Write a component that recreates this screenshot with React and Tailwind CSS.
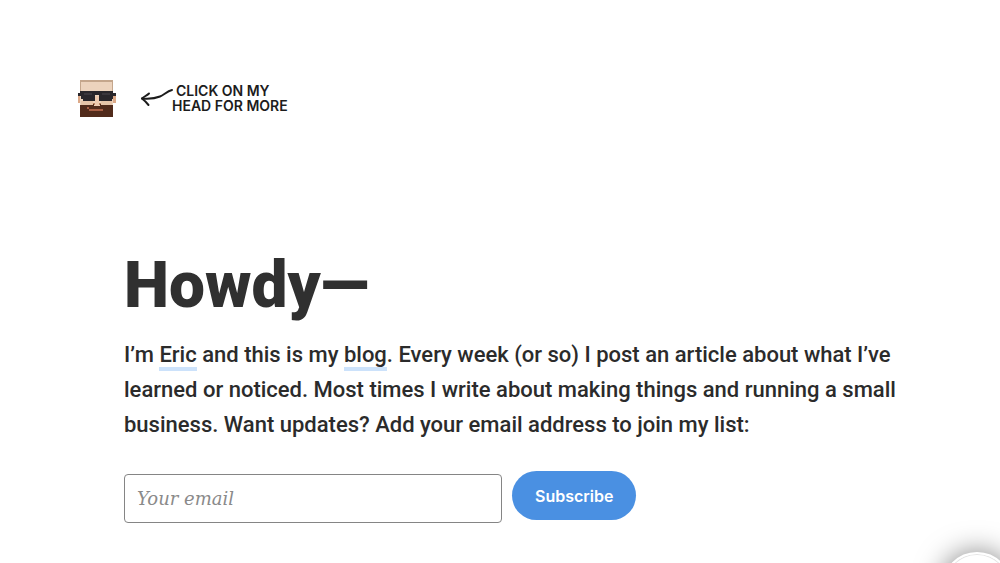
function Avatar() {
  return (
    <svg viewBox="0 0 38 38" className="size-[38px]" aria-hidden="true">
      <path d="M0 16h3v8H0zM35 16h3v8h-3z" fill="#dca988" />
      <path d="M2 1h33v27H2z" fill="#ecd3bd" />
      <path d="M2 1h33v2H2zM2 2h1v10H2zM34 2h1v10h-1z" fill="#c4a68c" />
      <path d="M3 22h12v4H3zM23 22h11v4H23z" fill="#e6c4a8" />
      <path d="M17 17h4v10h-4z" fill="#edc9ae" />
      <path d="M15 24h2v2h-2zM21 24h2v2h-2z" fill="#b98362" />
      <path d="M2 26h13v-1h1v2h6v-2h1v1h12v12H2z" fill="#512b1b" />
      <path d="M9 28h2v2H9zM11 30h14v2H11z" fill="#a85f45" />
      <path d="M0 14h2v-2h33v2h3v3h-3v3h-1v2H21v-6h-4v6H5v-2H3v-3H0z" fill="#29262b" />
      <path d="M6 14h8v2H6zM24 14h8v2h-8z" fill="#3a363c" />
    </svg>
  );
}

function Arrow() {
  return (
    <svg
      viewBox="0 0 34 20"
      className="h-5 w-[34px]"
      fill="none"
      stroke="#1c1c1c"
      strokeWidth="2"
      strokeLinecap="round"
      strokeLinejoin="round"
      aria-hidden="true"
    >
      <path d="M32 3C27 4 24 8 20 9.500C14 12 8 12 2 11.500" />
      <path d="M9 6.500C7 8.500 4 9.500 2 11.500C4 13 6 15 8.500 18" />
    </svg>
  );
}

export default function App() {
  return (
    <div className="min-h-screen overflow-hidden bg-white font-['Roboto','Liberation_Sans',sans-serif] text-[#2b2b2b]">
      <header className="px-[78px] pt-[79px]">
        <a href="#more" className="inline-flex items-start gap-6">
          <Avatar />
          <span className="flex items-start pt-1">
            <span className="pt-1">
              <Arrow />
            </span>
            <span className="-ml-[2px] font-['Inter','Liberation_Sans',sans-serif] text-[14px] leading-[15px] font-semibold text-[#1c1c1c] uppercase">
              <span className="block pl-1">Click on my</span>
              <span className="block">head for more</span>
            </span>
          </span>
        </a>
      </header>

      <main className="pt-[126px] pr-[92px] pl-[124px]">
        <h1 className="text-[64px] leading-[72px] font-black text-[#303030]">Howdy—</h1>
        <p className="max-w-[784px] pt-[15px] text-[22px] leading-[35px] font-medium">
          I’m{" "}
          <a href="#eric" className="border-b-4 border-[#cce2fb]">
            Eric
          </a>{" "}
          and this is my{" "}
          <a href="#blog" className="border-b-4 border-[#cce2fb]">
            blog
          </a>
          . Every week (or so) I post an article about what I’ve learned or noticed. Most times I
          write about making things and running a small business. Want updates? Add your email
          address to join my list:
        </p>
        <form className="flex items-start gap-[10px] pt-[29px]" onSubmit={(e) => e.preventDefault()}>
          <input
            type="email"
            aria-label="Your email"
            placeholder="Your email"
            className="mt-[3px] h-[49px] w-[378px] rounded border border-[#858585] px-3 font-['DejaVu_Serif',serif] text-[18px] italic placeholder:text-[#8a8a8a]"
          />
          <button
            type="submit"
            className="h-[49px] rounded-full bg-[#4a90e2] px-[23px] font-['Inter','Liberation_Sans',sans-serif] text-[16px] font-semibold text-white"
          >
            Subscribe
          </button>
        </form>
      </main>

      <button
        type="button"
        aria-label="Open menu"
        className="fixed -right-3 -bottom-[59px] size-[70px] rounded-full border-2 border-white bg-white shadow-[0_0_28px_rgba(0,0,0,0.5),inset_0_0_0_1px_#e5e5e5]"
      />
    </div>
  );
}
